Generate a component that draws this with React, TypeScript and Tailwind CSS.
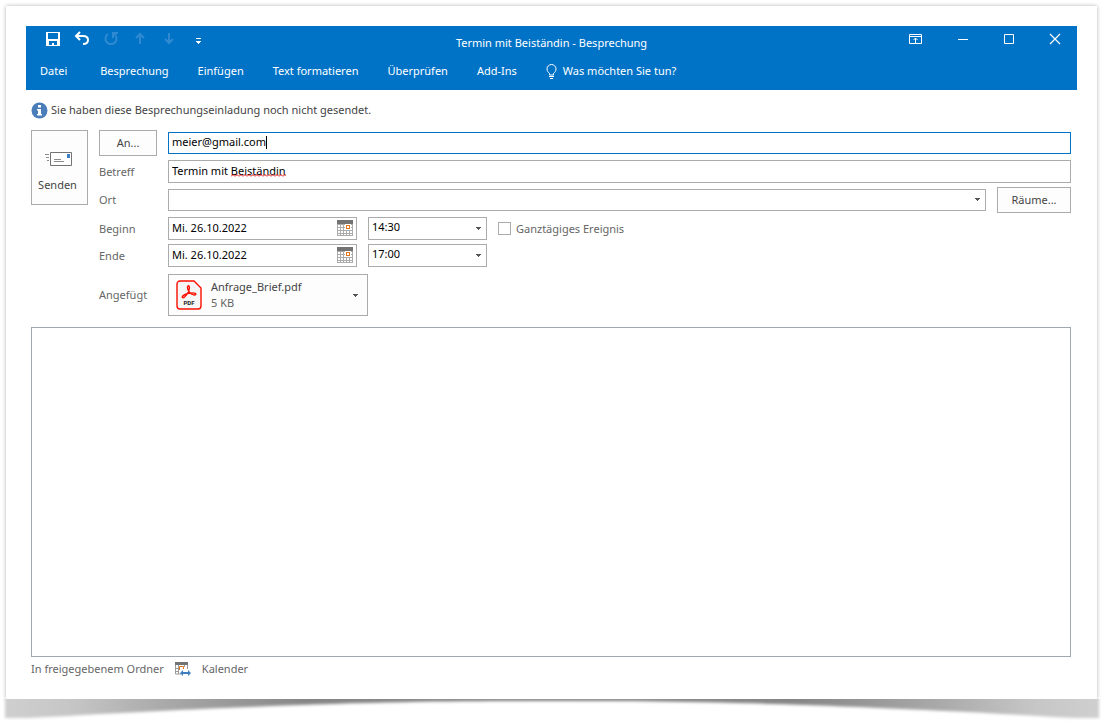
import { useState } from "react";

const TABS = ["Besprechung", "Einfügen", "Text formatieren", "Überprüfen", "Add-Ins"];

const FIELD = "w-full border border-[#ababab] bg-white px-[3px] text-[11px] text-black outline-none";

function CalendarIcon() {
  return (
    <svg width="16" height="16" viewBox="0 0 16 16" shapeRendering="crispEdges" aria-hidden="true">
      <rect width="16" height="16" fill="#ababab" />
      <rect width="16" height="4" fill="#737373" />
      {[1, 4, 7, 10, 13].map((x) =>
        [5, 8, 11, 14].map((y) => (
          <rect key={`${x}-${y}`} x={x} y={y} width="2" height={y === 14 ? 1 : 2} fill="#fff" />
        ))
      )}
      <rect x="8" y="4" width="6" height="6" fill="#fff" />
      <rect x="9" y="5" width="4" height="4" fill="#e0771c" />
      <rect x="10" y="6" width="2" height="2" fill="#fff" />
    </svg>
  );
}

function Arrow() {
  return (
    <svg width="5" height="3" viewBox="0 0 5 3" shapeRendering="crispEdges" aria-hidden="true">
      <path d="M0 0h5v1H4v1H3v1H2V2H1V1H0z" fill="#555" />
    </svg>
  );
}

function PdfIcon() {
  return (
    <svg width="26" height="30" viewBox="0 0 26 30" aria-hidden="true">
      <path d="M4 1h14l7 7v18a3 3 0 0 1-3 3H4a3 3 0 0 1-3-3V4a3 3 0 0 1 3-3z" fill="#f6f6f6" stroke="#fa0f00" strokeWidth="1.4" />
      <path d="M6.5 17.5c-1.2-.9 1.500-2.900 5-3.800 3.500-1 8.200-1.200 8.300.3.100 1.700-3.600.9-5.700-1.100-2-1.900-3.300-5.500-2.300-6.800.8-1 2.100.2 1.400 3.200-.7 3.400-4.800 9.600-6.700 8.200z" fill="none" stroke="#fa0f00" strokeWidth="1.400" />
      <text x="13" y="25" textAnchor="middle" fontSize="6" fontWeight="700" className="font-['Roboto',sans-serif]" fill="#1c1c1c">
        PDF
      </text>
    </svg>
  );
}

function QuickAccess() {
  return (
    <div className="flex items-center gap-[13px] pl-[19px]">
      <button type="button" aria-label="Speichern" className="h-4 w-4">
        <svg width="16" height="16" viewBox="0 0 16 16" shapeRendering="crispEdges">
          <path d="M1 1h14v14H1z" fill="#fff" />
          <path d="M3 2h10v6H3zM4 10h8v4H9v-2H7v2H4z" fill="#0173c7" />
        </svg>
      </button>
      <button type="button" aria-label="Rückgängig" className="h-4 w-4">
        <svg width="16" height="16" viewBox="0 0 16 16" fill="none" stroke="#fff" strokeWidth="2">
          <path d="M6 1 2 5l4 4M2 5h7c3 0 5 1.500 5 4s-2 4-5 4" />
        </svg>
      </button>
      <button type="button" aria-label="Wiederholen" disabled className="h-4 w-4">
        <svg width="16" height="16" viewBox="0 0 16 16" fill="none" stroke="#2f8ad1" strokeWidth="2">
          <path d="M5 3a5.500 5.500 0 1 0 6 0M10 7V2h5" />
        </svg>
      </button>
      <button type="button" aria-label="Vorheriges Element" disabled className="h-4 w-4">
        <svg width="16" height="16" viewBox="0 0 16 16" fill="none" stroke="#2f8ad1" strokeWidth="2">
          <path d="M8 13V3M4 7l4-4 4 4" />
        </svg>
      </button>
      <button type="button" aria-label="Nächstes Element" disabled className="h-4 w-4">
        <svg width="16" height="16" viewBox="0 0 16 16" fill="none" stroke="#2f8ad1" strokeWidth="2">
          <path d="M8 2v10M4 8l4 4 4-4" />
        </svg>
      </button>
      <button type="button" aria-label="Symbolleiste anpassen" className="flex h-4 w-4 items-end justify-center pb-[3px]">
        <svg width="5" height="6" viewBox="0 0 5 6" shapeRendering="crispEdges" fill="#fff">
          <path d="M0 0h5v1H0zM0 3h5v1H4v1H3v1H2V5H1V4H0z" />
        </svg>
      </button>
    </div>
  );
}

function WindowButtons() {
  return (
    <div className="flex items-center justify-end gap-[30px] pr-[14px]">
      <button type="button" aria-label="Menüband-Anzeigeoptionen" className="h-4 w-4">
        <svg width="13" height="16" viewBox="0 0 13 16" fill="none" stroke="#fff">
          <path d="M.5 3.500h12v9H.5zM0 5.500h13M6.500 12V7M4.500 9l2-2 2 2" />
        </svg>
      </button>
      <button type="button" aria-label="Minimieren" className="h-4 w-4">
        <svg width="16" height="16" viewBox="0 0 16 16" stroke="#fff">
          <path d="M3 8.500h10" />
        </svg>
      </button>
      <button type="button" aria-label="Maximieren" className="h-4 w-4">
        <svg width="16" height="16" viewBox="0 0 16 16" fill="none" stroke="#fff">
          <path d="M3.500 3.500h9v9h-9z" />
        </svg>
      </button>
      <button type="button" aria-label="Schließen" className="h-4 w-4">
        <svg width="16" height="16" viewBox="0 0 16 16" stroke="#fff" strokeWidth="1.200">
          <path d="m3 3 10 10M13 3 3 13" />
        </svg>
      </button>
    </div>
  );
}

function TitleBar() {
  return (
    <header className="h-16 bg-[#0173c7] text-white">
      <div className="grid h-[26px] grid-cols-[1fr_auto_1fr] items-center">
        <QuickAccess />
        <h1 className="pt-2">Termin mit Beiständin - Besprechung</h1>
        <WindowButtons />
      </div>
      <nav className="flex h-[38px] items-center pl-[14px]">
        <button type="button" className="mr-[33px]">Datei</button>
        <div className="flex gap-[29px]">
          {TABS.map((tab) => (
            <button key={tab} type="button">
              {tab}
            </button>
          ))}
          <button type="button" className="flex items-center gap-[6px]">
            <svg width="11" height="15" viewBox="0 0 11 15" fill="none" stroke="#fff">
              <path d="M3.500 11V9.500C2 8 1 7 1 5a4.500 4.500 0 0 1 9 0c0 2-1 3-2.500 4.500V11zM3 12.500h5M4 14.500h3" />
            </svg>
            Was möchten Sie tun?
          </button>
        </div>
      </nav>
    </header>
  );
}

type DateRowProps = { id: string; label: string; time: string };

function DateRow({ id, label, time }: DateRowProps) {
  return (
    <>
      <label htmlFor={id}>{label}</label>
      <div className="flex items-center">
        <div className="relative w-[189px]">
          <input id={id} defaultValue="Mi. 26.10.2022" className={`${FIELD} block h-[23px] pb-[3px]`} />
          <button type="button" aria-label={`${label}: Kalender`} className="absolute top-[3px] right-1">
            <CalendarIcon />
          </button>
        </div>
        <div className="relative ml-[11px] w-[119px]">
          <select aria-label={`${label}: Uhrzeit`} defaultValue={time} className={`${FIELD} block h-[23px] appearance-none pb-[3px]`}>
            <option>14:30</option>
            <option>17:00</option>
          </select>
          <span className="pointer-events-none absolute top-[10px] right-[6px]">
            <Arrow />
          </span>
        </div>
        {id === "start" && (
          <label className="ml-[11px] flex items-center gap-[5px]">
            <input type="checkbox" className="h-[13px] w-[13px] appearance-none border border-[#ababab] bg-white checked:bg-[#0173c7]" />
            Ganztägiges Ereignis
          </label>
        )}
      </div>
    </>
  );
}

function MeetingForm() {
  const [to, setTo] = useState("meier@gmail.com");

  return (
    <form className="flex items-start gap-[11px]" onSubmit={(e) => e.preventDefault()}>
      <button type="submit" className="flex h-[75px] w-[57px] shrink-0 flex-col items-center border border-[#ababab] bg-[#fdfdfd] pt-5 pr-1 text-[#444]">
        <svg width="28" height="16" viewBox="0 0 28 16" fill="none" className="mb-[10px] ml-[2px]">
          <path d="M5.500 1.500h21v13h-21z" fill="#fff" stroke="#737373" />
          <path d="M22 3h3v4h-3z" fill="#3f7ec1" />
          <path d="M9 8.500h7M9 10.500h10M0 3.500h4M1 6.500h3M2 9.500h2" stroke="#8a8a8a" />
        </svg>
        Senden
      </button>

      <div className="grid min-w-0 flex-1 grid-cols-[58px_1fr] items-center gap-x-[11px] gap-y-1">
        <button type="button" className="h-[26px] border border-[#ababab] bg-[#fdfdfd] text-[#444]">
          An...
        </button>
        <div className="relative">
          <input aria-label="An" value={to} onChange={(e) => setTo(e.target.value)} className="block h-[22px] w-full border border-[#0173c7] bg-white px-[3px] pb-[3px] text-[11px] text-black outline-none" />
          <span className="pointer-events-none absolute top-1 left-[98px] h-[13px] w-px bg-black" />
        </div>

        <label htmlFor="subject">Betreff</label>
        <div className="relative">
          <input id="subject" defaultValue="Termin mit Beiständin" className={`${FIELD} block h-[23px] pb-[3px]`} />
          <svg className="pointer-events-none absolute top-[14px] left-[63px]" width="55" height="3" aria-hidden="true">
            <defs>
              <pattern id="wave" width="4" height="3" patternUnits="userSpaceOnUse">
                <path d="M0 2.500 2 .5l2 2" fill="none" stroke="#e00000" />
              </pattern>
            </defs>
            <rect width="55" height="3" fill="url(#wave)" />
          </svg>
        </div>

        <label htmlFor="place">Ort</label>
        <div className="flex items-center gap-[11px]">
          <div className="relative flex-1">
            <input id="place" className={`${FIELD} block h-[22px]`} />
            <button type="button" aria-label="Orte anzeigen" className="absolute top-[9px] right-[6px]">
              <Arrow />
            </button>
          </div>
          <button type="button" className="h-[26px] w-[74px] border border-[#ababab] bg-[#fdfdfd] text-[#444]">
            Räume...
          </button>
        </div>

        <DateRow id="start" label="Beginn" time="14:30" />
        <DateRow id="end" label="Ende" time="17:00" />

        <span className="pt-[3px]">Angefügt</span>
        <button type="button" className="mt-[3px] flex h-[42px] w-[200px] items-center border border-[#ababab] bg-[#fdfdfd] pr-[9px] pl-[7px] text-left">
          <PdfIcon />
          <span className="ml-[9px] flex-1">
            <span className="block text-[#444]">Anfrage_Brief.pdf</span>
            <span className="block">5 KB</span>
          </span>
          <Arrow />
        </button>
      </div>
    </form>
  );
}

function CardShadow() {
  return (
    <svg viewBox="0 0 1111 29" preserveAspectRatio="none" className="relative block h-[29px] w-full" aria-hidden="true">
      <defs>
        <linearGradient id="shade">
          <stop offset="0" stopColor="#cfcfcf" />
          <stop offset=".06" stopColor="#c6c6c6" />
          <stop offset=".15" stopColor="#a8a8a8" />
          <stop offset=".28" stopColor="#858585" />
          <stop offset=".5" stopColor="#8c8c8c" />
          <stop offset=".72" stopColor="#858585" />
          <stop offset=".85" stopColor="#a8a8a8" />
          <stop offset=".94" stopColor="#c6c6c6" />
          <stop offset="1" stopColor="#cfcfcf" />
        </linearGradient>
        <filter id="soft" x="-2%" y="-50%" width="104%" height="200%">
          <feGaussianBlur stdDeviation="1.500" />
        </filter>
      </defs>
      <path d="M5-10H1099V19H1075C784 2 654 2 552 2S320 2 29 19H5z" fill="url(#shade)" filter="url(#soft)" />
    </svg>
  );
}

export default function App() {
  return (
    <div className="min-h-screen bg-white pt-[6px] font-['Noto_Sans','Segoe_UI',sans-serif] text-[11px] leading-4 text-[#666]">
      <main className="mr-[14px] ml-[6px] bg-white px-5 pt-5 pb-[22px] shadow-[0_0_4px_rgba(0,0,0,0.3)]">
        <TitleBar />
        <div className="pr-[6px] pl-[5px]">
          <p className="flex h-10 items-center gap-[3px] text-[#444]">
            <svg width="17" height="17" viewBox="0 0 17 17" aria-hidden="true">
              <circle cx="8.500" cy="8.500" r="8" fill="#4a7ebb" />
              <path d="M7 3h3v2.500H7zM6 7h4v5h1v1.500H6V12h1V8.500H6z" fill="#fff" />
            </svg>
            Sie haben diese Besprechungseinladung noch nicht gesendet.
          </p>
          <MeetingForm />
          <textarea aria-label="Nachricht" className="mt-[11px] block h-[330px] w-full resize-none border border-[#a0a7b2] bg-white p-2 outline-none" />
          <footer className="flex h-5 items-center pt-1">
            <span>In freigegebenem Ordner</span>
            <svg width="16" height="16" viewBox="0 0 16 16" className="mx-[11px]" aria-hidden="true">
              <path d="M0 1h13v3H0z" fill="#737373" />
              <path d="M.5 4v9H6M12.500 4v4M3.500 4v9M9.500 4v2M0 7.500h3M0 10.500h3" fill="none" stroke="#9a9a9a" />
              <path d="M4.500 9V5.500h4V8" fill="none" stroke="#e0771c" />
              <path d="M5 12l3-3v2h5V9l3 3-3 3v-2H8v2z" fill="#3f7ec1" />
            </svg>
            <span>Kalender</span>
          </footer>
        </div>
      </main>
      <CardShadow />
    </div>
  );
}
